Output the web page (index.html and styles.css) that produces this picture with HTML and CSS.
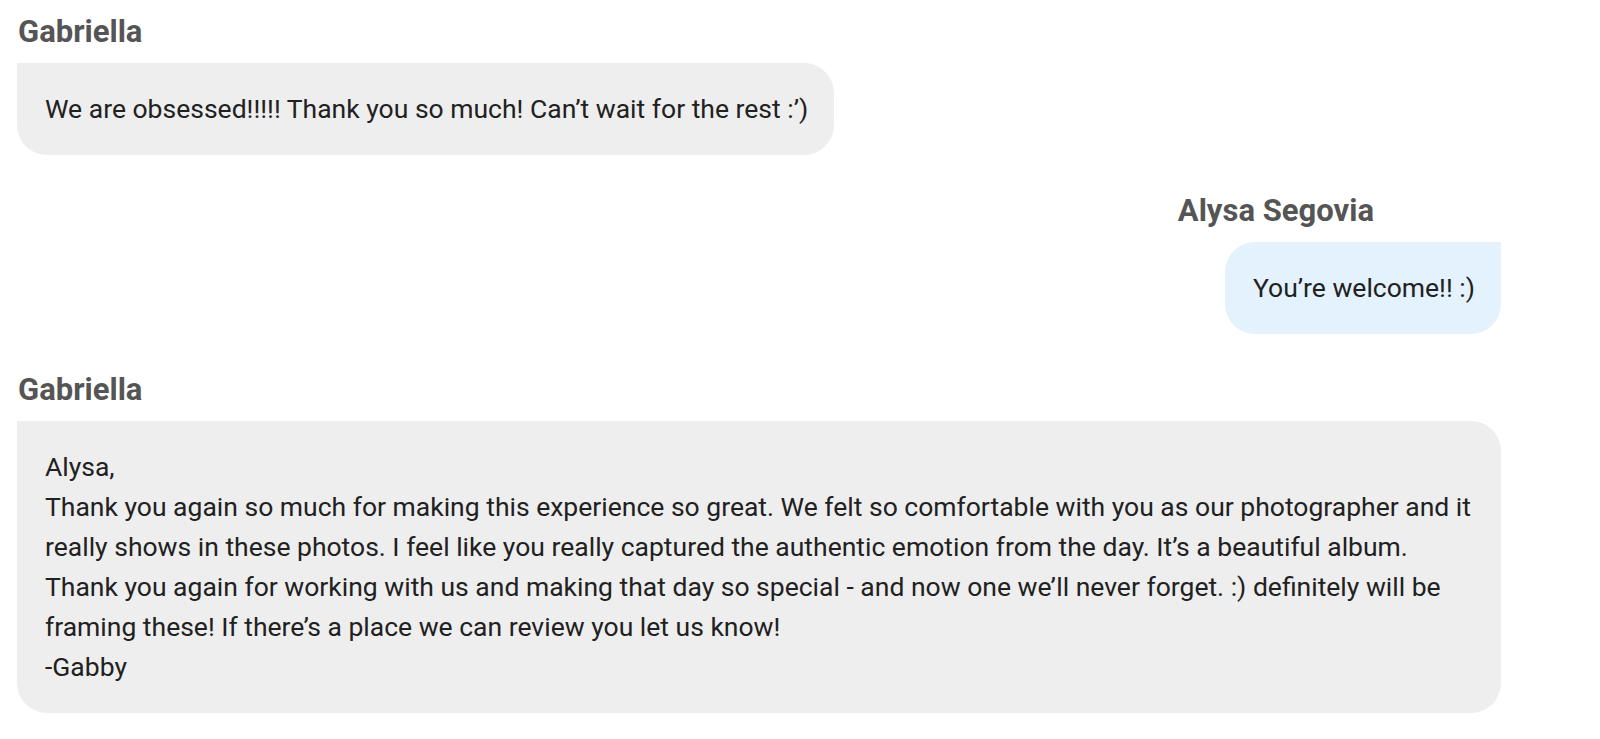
FILE: index.html
```html
<!DOCTYPE html>
<html lang="en">
<head>
<meta charset="utf-8">
<title>Messages</title>
<link rel="stylesheet" href="styles.css">
</head>
<body>
<div class="thread">
  <div class="message incoming">
    <div class="sender">Gabriella</div>
    <div class="bubble">We are obsessed!!!!! Thank you so much! Can’t wait for the rest :’)</div>
  </div>
  <div class="message outgoing">
    <div class="sender">Alysa Segovia</div>
    <div class="bubble">You’re welcome!! :)</div>
  </div>
  <div class="message incoming">
    <div class="sender">Gabriella</div>
    <div class="bubble">Alysa,<br>Thank you again so much for making this experience so great. We felt so comfortable with you as our photographer and it really shows in these photos. I feel like you really captured the authentic emotion from the day. It’s a beautiful album.<br>Thank you again for working with us and making that day so special - and now one we’ll never forget. :) definitely will be framing these! If there’s a place we can review you let us know!<br>-Gabby</div>
  </div>
</div>
</body>
</html>
```

FILE: styles.css
```css
html, body {
  margin: 0;
  padding: 0;
  background: #ffffff;
}

body {
  font-family: Roboto, "Liberation Sans", sans-serif;
  color: #212121;
}

.thread {
  width: 1484px;
  padding: 13px 0 0 17px;
  display: flex;
  flex-direction: column;
  gap: 37px;
}

.message {
  display: flex;
  flex-direction: column;
  gap: 13px;
}

.message.incoming {
  align-items: flex-start;
}

.message.outgoing {
  align-items: flex-end;
}

.sender {
  font-size: 31px;
  font-weight: 700;
  line-height: 37px;
  color: #555555;
  padding-left: 1px;
}

.outgoing .sender {
  padding-right: 127px;
}

.bubble {
  font-size: 26.5px;
  line-height: 40px;
  padding: 26px 26px 26px 28px;
  border-radius: 0 30px 30px 30px;
  background: #eeeeee;
}

.outgoing .bubble {
  background: #e3f2fd;
  border-radius: 30px 0 30px 30px;
}
```
